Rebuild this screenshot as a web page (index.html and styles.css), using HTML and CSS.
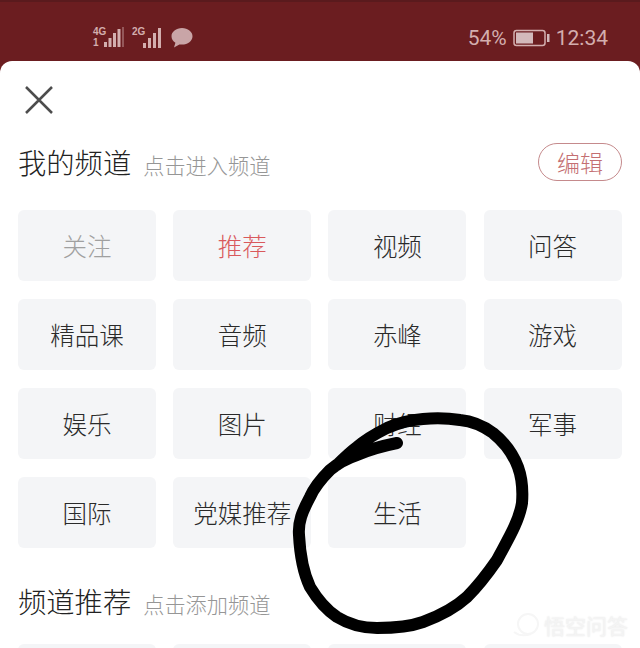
FILE: index.html
```html
<!DOCTYPE html>
<html>

<head>
    <title>频道</title>
    <meta charset="utf-8">
    <meta name="viewport" content="width=device-width, initial-scale=1.0">
    <link rel="stylesheet" href="styles.css">
</head>

<body>
    <header class="status">
        <div class="signal">
            <div class="sim">
                <span class="net">4G</span>
                <span class="net net-small">1</span>
            </div>
            <svg class="bars" width="21" height="22" viewBox="0 0 21 22">
                <rect x="0" y="15" width="3" height="5" />
                <rect x="4.500" y="11" width="3" height="9" />
                <rect x="9" y="6" width="3" height="14" />
                <rect x="18" y="0" width="2" height="20" opacity="0.4" />
                <rect x="13.500" y="2" width="3" height="18" />
            </svg>
            <span class="net net-two">2G</span>
            <svg class="bars" width="22" height="22" viewBox="0 0 22 22">
                <rect x="0" y="16" width="3" height="5" />
                <rect x="5" y="11" width="3" height="10" />
                <rect x="10" y="6" width="3" height="15" />
                <rect x="15" y="1" width="3" height="20" />
            </svg>
            <svg class="bubble" width="22" height="22" viewBox="0 0 22 22">
                <path d="M11 1C5.200 1 .5 4.700 .5 9.300c0 2.700 1.500 5 3.900 6.500L3 20.500l5.400-3.100c.8.200 1.700.2 2.600.2 5.800 0 10.500-3.700 10.500-8.300S16.800 1 11 1z" />
            </svg>
        </div>
        <div class="right">
            <span>54%</span>
            <svg class="battery" width="37" height="18" viewBox="0 0 37 18">
                <rect x="1" y="1.500" width="31" height="15" rx="2.500" class="batt-line" />
                <rect x="3" y="3.500" width="17" height="11" class="batt-fill" />
                <rect x="34" y="5" width="2.500" height="8" class="batt-fill" />
            </svg>
            <span>12:34</span>
        </div>
    </header>

    <main class="panel">
        <svg class="luk" width="28" height="28" viewBox="0 0 28 28">
            <path d="M1 1L27 27M27 1L1 27" />
        </svg>

        <div class="head head-mine">
            <h2>我的频道</h2>
            <span class="hint">点击进入频道</span>
            <button class="edit">编辑</button>
        </div>

        <section class="grid">
            <div class="tile off">关注</div>
            <div class="tile on">推荐</div>
            <div class="tile">视频</div>
            <div class="tile">问答</div>
            <div class="tile">精品课</div>
            <div class="tile">音频</div>
            <div class="tile">赤峰</div>
            <div class="tile">游戏</div>
            <div class="tile">娱乐</div>
            <div class="tile">图片</div>
            <div class="tile">财经</div>
            <div class="tile">军事</div>
            <div class="tile">国际</div>
            <div class="tile">党媒推荐</div>
            <div class="tile">生活</div>
        </section>

        <div class="head head-more">
            <h2>频道推荐</h2>
            <span class="hint">点击添加频道</span>
        </div>

        <section class="grid">
            <div class="tile"></div>
            <div class="tile"></div>
            <div class="tile"></div>
            <div class="tile"></div>
        </section>
    </main>

    <!-- kuglepen-cirklen ovenpå skærmbilledet -->
    <svg class="ink" width="640" height="648" viewBox="0 0 640 648">
        <path d="M397 443C382 446 368 450 357 455C345 459 337 464 330 470C320 480 314 488 310 497C302 512 298 522 299 535C300 555 303 572 310 587C319 602 328 611 337 617C350 625 363 628 377 628C394 628 409 627 423 622C442 615 456 607 467 597C479 585 488 573 497 560C507 541 519 522 522 503C523 490 522 478 518 467C512 451 503 441 493 433C482 425 471 421 460 420C447 418 435 418 423 419C410 420 398 423 387 428C375 434 365 440 357 447C349 453 343 459 337 465" />
    </svg>

    <div class="mark">
        <svg width="30" height="26" viewBox="0 0 30 26">
            <circle cx="17" cy="12" r="10" />
            <path d="M3 20C8 24 14 24 20 22" />
        </svg>
        <span>悟空问答</span>
    </div>
</body>

</html>
```

FILE: styles.css
```css
* {
    box-sizing: border-box;
}

html,
body {
    margin: 0;
    height: 648px;
    overflow: hidden;
}

body {
    position: relative;
    background-color: #6b1d20;
    font-family: "Noto Sans CJK SC", "Liberation Sans", sans-serif;
    color: #333;
}

.status {
    display: flex;
    justify-content: space-between;
    align-items: center;
    height: 61px;
    padding: 12px 32px 0 93px;
    border-top: 2px solid #5a1a1d;
    color: #d3aeae;
    font-family: Roboto, sans-serif;
    font-size: 21px;
}

.signal {
    display: flex;
    align-items: center;
}

.sim {
    display: flex;
    flex-direction: column;
    width: 11px;
}

.net {
    font-family: "Liberation Sans", sans-serif;
    font-size: 10px;
    font-weight: bold;
    line-height: 10px;
    white-space: nowrap;
}

.net-small {
    padding-top: 1px;
}

.net-two {
    align-self: flex-start;
    width: 11px;
    margin-left: 7px;
    margin-right: 0;
}

.bars {
    display: block;
    fill: #d3aeae;
}

.bubble {
    display: block;
    margin-left: 6px;
    fill: #c9a5a7;
}

.right {
    display: flex;
    align-items: center;
    gap: 6px;
}

.batt-line {
    fill: none;
    stroke: #d3aeae;
    stroke-width: 1.500;
}

.batt-fill {
    fill: #d3b9bb;
}

.panel {
    height: 587px;
    padding: 24px 18px 0;
    overflow: hidden;
    background-color: #fff;
    border-radius: 12px 12px 0 0;
}

.luk {
    display: block;
    margin: 1px 0 0 7px;
    fill: none;
    stroke: #4d4d4d;
    stroke-width: 2.500;
}

.head {
    display: flex;
    align-items: center;
    height: 38px;
}

.head-mine {
    margin-top: 29px;
}

.head-more {
    margin-top: 34px;
}

h2 {
    margin: 0;
    font-size: 28.300px;
    font-weight: 300;
    line-height: 38px;
    color: #222;
}

.hint {
    margin: 4px 0 0 12px;
    font-size: 21.200px;
    font-weight: 300;
    color: #969696;
}

.edit {
    width: 84px;
    height: 38px;
    margin-left: auto;
    padding: 0;
    background-color: #fff;
    border: 1.500px solid #c58a8c;
    border-radius: 19px;
    font-family: inherit;
    font-size: 23px;
    font-weight: 300;
    line-height: 34px;
    color: #c46f72;
}

.grid {
    display: grid;
    grid-template-columns: repeat(4, 138px);
    grid-auto-rows: 71px;
    gap: 18px 17.200px;
    margin-top: 29px;
}

.head-more + .grid {
    margin-top: 24px;
}

.tile {
    display: flex;
    justify-content: center;
    align-items: center;
    background-color: #f4f5f7;
    border-radius: 6px;
    font-size: 24.500px;
    font-weight: 300;
    color: #2a2a2a;
}

.off {
    color: #a0a0a0;
}

.on {
    color: #d9595c;
}

.ink {
    position: absolute;
    top: 0;
    left: 0;
    fill: none;
    stroke: #000;
    stroke-width: 12;
    stroke-linecap: round;
    stroke-linejoin: round;
}

.mark {
    position: absolute;
    right: 12px;
    bottom: 8px;
    display: flex;
    align-items: center;
    gap: 3px;
    font-size: 21px;
    color: #f4f4f4;
    text-shadow: 0 0 2px #e6e6e6;
}

.mark svg {
    display: block;
    fill: none;
    stroke: #f6f6f6;
    stroke-width: 2;
}
```
